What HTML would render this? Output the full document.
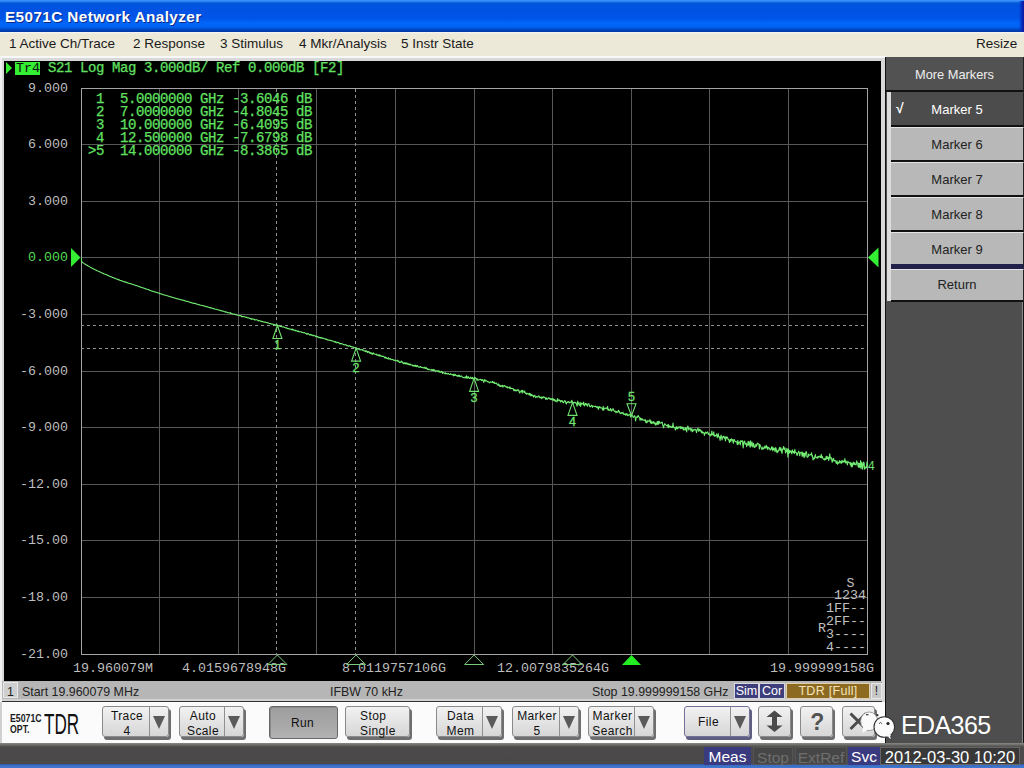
<!DOCTYPE html>
<html><head><meta charset="utf-8">
<style>
*{margin:0;padding:0;box-sizing:border-box}
html,body{width:1024px;height:768px;overflow:hidden;background:#ece9d8;font-family:"Liberation Sans",sans-serif}
.abs{position:absolute}
#title{left:0;top:0;width:1024px;height:32px;background:linear-gradient(#3c98ff 0px,#2a80f0 1.5px,#0058d8 3px,#0052e0 6px,#0054e6 18px,#0066fa 23px,#0064f4 27px,#0042b8 30px,#0038a8 32px)}
#title span{position:absolute;left:5px;top:8px;color:#fff;font-weight:bold;font-size:15.3px;letter-spacing:0.4px;text-shadow:1px 1px 0 #0a2a8a}
#menu{left:0;top:32px;width:1024px;height:25px;background:linear-gradient(#f4f6fa,#ece9d8 2px,#ece9d8);font-size:13.5px;color:#1a1a1a}
#menu span{position:absolute;top:4px}
#frame{left:0;top:56px;width:886px;height:647px;background:#d8d8d8;border-top:2px solid #f8f8f8;border-left:2px solid #f0f0f0}
#plot{left:4px;top:61px;width:877px;height:620px;background:#000}
#stat{left:2px;top:681px;width:880px;height:21px;background:#b6b6b6;font-size:12.4px;color:#222;border-bottom:1px solid #333;box-shadow:inset 0 -2px 0 #d2d2d2}
#stat span{position:absolute;top:4px}
#soft{left:885px;top:57px;width:139px;height:688px;background:#4e4e4e;border-left:1px solid #111;border-right:1px solid #111;box-shadow:inset -1px 0 0 #8a8a8a}
.sk{position:absolute;left:5px;width:133px;height:35px;background:#b8b8b8;color:#222;font-size:13px;text-align:center;line-height:33px;border-top:1px solid #e4e4e4;border-bottom:2px solid #111;border-right:1px solid #222}
#btnbar{left:0;top:702px;width:885px;height:41px;background:#fbfbfb;border-left:2px solid #d0d0d0}
#bot{left:0;top:743px;width:1024px;height:22px;background:linear-gradient(#8a8a84,#6a6a68 2px,#4c4a4a 4px,#4a4848)}
#blue{left:0;top:764px;width:1024px;height:4px;background:linear-gradient(#2a4c90,#3c6cc4 1px,#4078d0)}
.btn{position:absolute;top:706px;height:31px;background:linear-gradient(#f2f2f2,#d6d6d6);border:1px solid #8a8a8a;border-radius:3px;box-shadow:2px 3px 0 #6e6e6e;font-size:12px;color:#111;text-align:center}
.btn .l{position:absolute;left:0;top:5px;bottom:0;display:flex;align-items:center;justify-content:center;line-height:15px;letter-spacing:0.4px}
.btn .d{position:absolute;top:0;right:0;bottom:0;width:19px;border-left:1px solid #909090}
.btn .d i{position:absolute;left:3px;top:9px;width:0;height:0;border-left:6px solid transparent;border-right:6px solid transparent;border-top:13px solid #5a5a5a}
.sb{position:absolute;top:747px;height:18px;font-size:15.5px;line-height:20px;text-align:center}
</style></head><body>
<div id="title" class="abs"><span>E5071C Network Analyzer</span><div style="position:absolute;right:0;top:1px;width:5px;height:31px;background:linear-gradient(90deg,rgba(0,30,160,0),#0a2ab8 60%,#0818a0)"></div></div>
<div id="menu" class="abs">
<span style="left:9px">1 Active Ch/Trace</span>
<span style="left:133px">2 Response</span>
<span style="left:220px">3 Stimulus</span>
<span style="left:299px">4 Mkr/Analysis</span>
<span style="left:401px">5 Instr State</span>
<span style="left:976px">Resize</span>
</div>
<div id="frame" class="abs"></div>
<div id="plot" class="abs"></div>
<svg class="abs" style="left:0;top:0" width="1024" height="768" viewBox="0 0 1024 768">
<g stroke="#585858" stroke-width="1" fill="none" shape-rendering="crispEdges">
<line x1="159.5" y1="88" x2="159.5" y2="655"/>
<line x1="238.5" y1="88" x2="238.5" y2="655"/>
<line x1="316.5" y1="88" x2="316.5" y2="655"/>
<line x1="395.5" y1="88" x2="395.5" y2="655"/>
<line x1="474.5" y1="88" x2="474.5" y2="655"/>
<line x1="552.5" y1="88" x2="552.5" y2="655"/>
<line x1="631.5" y1="88" x2="631.5" y2="655"/>
<line x1="709.5" y1="88" x2="709.5" y2="655"/>
<line x1="788.5" y1="88" x2="788.5" y2="655"/>
<line x1="81" y1="144.5" x2="868" y2="144.5"/>
<line x1="81" y1="201.5" x2="868" y2="201.5"/>
<line x1="81" y1="257.5" x2="868" y2="257.5"/>
<line x1="81" y1="314.5" x2="868" y2="314.5"/>
<line x1="81" y1="371.5" x2="868" y2="371.5"/>
<line x1="81" y1="427.5" x2="868" y2="427.5"/>
<line x1="81" y1="484.5" x2="868" y2="484.5"/>
<line x1="81" y1="540.5" x2="868" y2="540.5"/>
<line x1="81" y1="597.5" x2="868" y2="597.5"/>
<rect x="81.5" y="88.5" width="786" height="566" stroke="#a4a4a4"/>
</g>
<g stroke="#8c928c" stroke-width="1" fill="none" stroke-dasharray="3 3" shape-rendering="crispEdges">
<line x1="81" y1="325.5" x2="868" y2="325.5"/>
<line x1="81" y1="348.5" x2="868" y2="348.5"/>
<line x1="276.5" y1="89" x2="276.5" y2="655"/>
<line x1="355.5" y1="89" x2="355.5" y2="655"/>
</g>
<path d="M81.5,257.5 L81.5,261.7 L82.0,261.9 L82.5,262.3 L83.0,262.8 L83.5,263.1 L84.0,263.4 L84.4,263.7 L84.9,264.0 L85.4,264.3 L85.9,264.8 L86.4,264.8 L86.9,265.3 L87.4,265.5 L87.9,265.8 L88.4,266.1 L88.9,266.4 L89.4,266.6 L89.9,266.9 L90.3,267.2 L90.8,267.4 L91.3,267.8 L91.8,268.1 L92.3,268.2 L92.8,268.5 L93.3,268.9 L93.8,269.1 L94.3,269.3 L94.8,269.6 L95.3,269.8 L95.7,270.0 L96.2,270.1 L96.7,270.5 L97.2,270.7 L97.7,270.9 L98.2,271.1 L98.7,271.4 L99.2,271.6 L99.7,271.8 L100.2,272.1 L100.7,272.4 L101.2,272.5 L101.6,272.7 L102.1,272.9 L102.6,273.3 L103.1,273.4 L103.6,273.7 L104.1,274.0 L104.6,274.0 L105.1,274.2 L105.6,274.5 L106.1,274.6 L106.6,274.8 L107.0,275.0 L107.5,275.3 L108.0,275.4 L108.5,275.8 L109.0,275.9 L109.5,276.1 L110.0,276.5 L110.5,276.5 L111.0,276.8 L111.5,276.9 L112.0,277.2 L112.4,277.4 L112.9,277.5 L113.4,277.8 L113.9,277.9 L114.4,278.2 L114.9,278.3 L115.4,278.6 L115.9,278.6 L116.4,278.9 L116.9,279.1 L117.4,279.2 L117.9,279.4 L118.3,279.5 L118.8,280.0 L119.3,279.9 L119.8,280.2 L120.3,280.4 L120.8,280.6 L121.3,280.6 L121.8,281.0 L122.3,281.0 L122.8,281.1 L123.3,281.5 L123.7,281.6 L124.2,281.8 L124.7,281.9 L125.2,281.9 L125.7,282.0 L126.2,282.5 L126.7,282.6 L127.2,282.6 L127.7,282.7 L128.2,283.0 L128.7,283.2 L129.2,283.3 L129.6,283.5 L130.1,283.6 L130.6,283.8 L131.1,283.9 L131.6,284.1 L132.1,284.3 L132.6,284.4 L133.1,284.7 L133.6,284.8 L134.1,284.8 L134.6,285.1 L135.0,285.3 L135.5,285.2 L136.0,285.5 L136.5,285.5 L137.0,285.8 L137.5,286.1 L138.0,286.3 L138.5,286.2 L139.0,286.3 L139.5,286.8 L140.0,286.9 L140.5,287.0 L140.9,287.3 L141.4,287.4 L141.9,287.6 L142.4,287.7 L142.9,287.8 L143.4,288.0 L143.9,288.1 L144.4,288.4 L144.9,288.5 L145.4,288.9 L145.9,289.0 L146.3,289.0 L146.8,289.3 L147.3,289.3 L147.8,289.5 L148.3,289.6 L148.8,289.8 L149.3,290.0 L149.8,290.3 L150.3,290.5 L150.8,290.7 L151.3,290.8 L151.7,291.0 L152.2,291.1 L152.7,291.3 L153.2,291.4 L153.7,291.6 L154.2,291.9 L154.7,291.9 L155.2,292.0 L155.7,292.1 L156.2,292.3 L156.7,292.6 L157.2,292.8 L157.6,292.7 L158.1,292.9 L158.6,293.0 L159.1,293.1 L159.6,293.6 L160.1,293.6 L160.6,293.7 L161.1,293.9 L161.6,294.0 L162.1,294.2 L162.6,294.4 L163.0,294.7 L163.5,294.7 L164.0,294.9 L164.5,295.0 L165.0,295.2 L165.5,295.2 L166.0,295.3 L166.5,295.5 L167.0,295.7 L167.5,295.8 L168.0,296.0 L168.5,296.2 L168.9,296.3 L169.4,296.4 L169.9,296.6 L170.4,296.7 L170.9,297.0 L171.4,296.9 L171.9,297.2 L172.4,297.4 L172.9,297.4 L173.4,297.6 L173.9,297.7 L174.3,297.9 L174.8,298.1 L175.3,298.2 L175.8,298.1 L176.3,298.4 L176.8,298.7 L177.3,298.7 L177.8,299.0 L178.3,298.8 L178.8,299.3 L179.3,299.2 L179.8,299.3 L180.2,299.7 L180.7,299.6 L181.2,299.7 L181.7,299.9 L182.2,300.0 L182.7,300.1 L183.2,300.3 L183.7,300.4 L184.2,300.6 L184.7,300.7 L185.2,301.0 L185.6,300.9 L186.1,301.2 L186.6,301.4 L187.1,301.4 L187.6,301.4 L188.1,301.6 L188.6,301.9 L189.1,301.9 L189.6,302.1 L190.1,302.2 L190.6,302.4 L191.0,302.8 L191.5,302.6 L192.0,302.9 L192.5,303.0 L193.0,303.2 L193.5,303.4 L194.0,303.4 L194.5,303.3 L195.0,303.4 L195.5,303.7 L196.0,303.7 L196.5,304.0 L196.9,304.3 L197.4,304.2 L197.9,304.3 L198.4,304.6 L198.9,304.6 L199.4,304.7 L199.9,305.0 L200.4,305.2 L200.9,305.2 L201.4,305.3 L201.9,305.5 L202.3,305.5 L202.8,305.5 L203.3,305.9 L203.8,305.9 L204.3,306.0 L204.8,306.2 L205.3,306.2 L205.8,306.6 L206.3,306.6 L206.8,306.5 L207.3,306.8 L207.8,307.1 L208.2,307.1 L208.7,307.2 L209.2,307.4 L209.7,307.7 L210.2,307.5 L210.7,308.0 L211.2,307.9 L211.7,308.1 L212.2,308.4 L212.7,308.2 L213.2,308.5 L213.6,308.8 L214.1,308.7 L214.6,309.0 L215.1,309.3 L215.6,309.3 L216.1,309.3 L216.6,309.4 L217.1,309.6 L217.6,309.7 L218.1,309.8 L218.6,310.0 L219.1,310.0 L219.5,310.3 L220.0,310.4 L220.5,310.5 L221.0,310.8 L221.5,310.9 L222.0,310.7 L222.5,311.0 L223.0,311.3 L223.5,311.3 L224.0,311.6 L224.5,311.6 L224.9,311.9 L225.4,311.8 L225.9,312.3 L226.4,311.9 L226.9,312.4 L227.4,312.7 L227.9,312.6 L228.4,312.7 L228.9,312.8 L229.4,313.1 L229.9,313.0 L230.3,312.6 L230.8,313.5 L231.3,313.4 L231.8,313.6 L232.3,313.7 L232.8,314.1 L233.3,314.2 L233.8,314.1 L234.3,314.3 L234.8,314.1 L235.3,314.6 L235.8,314.6 L236.2,314.3 L236.7,315.0 L237.2,315.2 L237.7,315.2 L238.2,315.3 L238.7,315.3 L239.2,315.5 L239.7,315.8 L240.2,315.8 L240.7,315.5 L241.2,315.9 L241.6,316.7 L242.1,316.4 L242.6,316.6 L243.1,316.5 L243.6,316.8 L244.1,316.5 L244.6,316.8 L245.1,317.0 L245.6,317.2 L246.1,317.4 L246.6,317.4 L247.1,317.4 L247.5,317.7 L248.0,317.9 L248.5,317.8 L249.0,318.1 L249.5,318.3 L250.0,318.5 L250.5,318.6 L251.0,318.7 L251.5,319.3 L252.0,318.7 L252.5,318.9 L252.9,319.2 L253.4,319.1 L253.9,319.3 L254.4,319.4 L254.9,320.1 L255.4,319.8 L255.9,319.8 L256.4,319.7 L256.9,319.8 L257.4,320.0 L257.9,320.6 L258.4,320.9 L258.8,320.5 L259.3,320.8 L259.8,320.7 L260.3,321.0 L260.8,321.1 L261.3,321.6 L261.8,321.3 L262.3,321.6 L262.8,321.6 L263.3,321.7 L263.8,321.9 L264.2,322.0 L264.7,322.2 L265.2,322.1 L265.7,322.3 L266.2,322.6 L266.7,322.8 L267.2,322.5 L267.7,322.9 L268.2,322.9 L268.7,323.1 L269.2,323.4 L269.6,323.6 L270.1,323.5 L270.6,323.6 L271.1,323.7 L271.6,324.2 L272.1,324.2 L272.6,324.2 L273.1,324.0 L273.6,325.0 L274.1,324.5 L274.6,324.9 L275.1,324.8 L275.5,325.1 L276.0,325.1 L276.5,324.9 L277.0,325.3 L277.5,325.4 L278.0,325.6 L278.5,326.0 L279.0,325.8 L279.5,326.1 L280.0,326.4 L280.5,326.3 L280.9,326.5 L281.4,326.4 L281.9,326.8 L282.4,327.0 L282.9,326.7 L283.4,326.9 L283.9,327.0 L284.4,327.3 L284.9,327.6 L285.4,327.8 L285.9,327.9 L286.4,327.7 L286.8,328.1 L287.3,328.6 L287.8,328.4 L288.3,328.8 L288.8,328.6 L289.3,329.0 L289.8,329.2 L290.3,329.0 L290.8,329.2 L291.3,329.7 L291.8,329.3 L292.2,329.1 L292.7,330.1 L293.2,329.4 L293.7,330.2 L294.2,330.3 L294.7,330.3 L295.2,330.8 L295.7,330.2 L296.2,330.6 L296.7,331.0 L297.2,331.0 L297.7,331.5 L298.1,331.3 L298.6,331.1 L299.1,331.9 L299.6,331.8 L300.1,331.8 L300.6,331.7 L301.1,331.7 L301.6,332.3 L302.1,332.5 L302.6,332.4 L303.1,332.7 L303.5,332.8 L304.0,332.6 L304.5,332.6 L305.0,333.1 L305.5,333.4 L306.0,333.3 L306.5,334.1 L307.0,333.7 L307.5,334.1 L308.0,333.4 L308.5,334.0 L308.9,334.3 L309.4,334.5 L309.9,335.2 L310.4,334.5 L310.9,334.4 L311.4,335.2 L311.9,335.0 L312.4,335.1 L312.9,335.8 L313.4,335.3 L313.9,335.3 L314.4,335.8 L314.8,336.0 L315.3,335.9 L315.8,336.7 L316.3,336.4 L316.8,336.3 L317.3,337.0 L317.8,336.6 L318.3,337.1 L318.8,337.7 L319.3,337.3 L319.8,337.7 L320.2,337.5 L320.7,338.0 L321.2,337.5 L321.7,338.2 L322.2,338.0 L322.7,338.4 L323.2,338.5 L323.7,338.2 L324.2,338.6 L324.7,338.9 L325.2,339.3 L325.7,338.8 L326.1,339.0 L326.6,339.5 L327.1,339.5 L327.6,340.0 L328.1,340.1 L328.6,340.2 L329.1,340.0 L329.6,340.2 L330.1,340.6 L330.6,340.3 L331.1,340.5 L331.5,340.8 L332.0,340.7 L332.5,341.2 L333.0,341.3 L333.5,341.3 L334.0,341.6 L334.5,341.5 L335.0,342.2 L335.5,341.6 L336.0,342.4 L336.5,342.3 L337.0,342.9 L337.4,342.4 L337.9,342.3 L338.4,342.5 L338.9,342.8 L339.4,343.6 L339.9,343.5 L340.4,343.6 L340.9,343.9 L341.4,343.4 L341.9,343.8 L342.4,344.0 L342.8,344.0 L343.3,344.6 L343.8,344.8 L344.3,344.9 L344.8,344.6 L345.3,344.8 L345.8,344.9 L346.3,344.9 L346.8,345.8 L347.3,345.7 L347.8,345.6 L348.2,346.2 L348.7,346.1 L349.2,345.8 L349.7,345.9 L350.2,346.0 L350.7,346.5 L351.2,346.7 L351.7,346.5 L352.2,347.1 L352.7,347.0 L353.2,346.8 L353.7,347.5 L354.1,347.8 L354.6,347.7 L355.1,347.7 L355.6,347.8 L356.1,348.1 L356.6,348.1 L357.1,349.0 L357.6,348.9 L358.1,348.7 L358.6,349.2 L359.1,349.5 L359.5,349.6 L360.0,349.7 L360.5,349.6 L361.0,350.0 L361.5,349.7 L362.0,349.4 L362.5,350.2 L363.0,349.8 L363.5,350.3 L364.0,351.0 L364.5,350.9 L365.0,351.3 L365.4,350.8 L365.9,351.7 L366.4,350.9 L366.9,351.3 L367.4,352.5 L367.9,351.6 L368.4,351.5 L368.9,352.5 L369.4,352.0 L369.9,353.2 L370.4,352.6 L370.8,353.5 L371.3,352.8 L371.8,353.8 L372.3,354.3 L372.8,353.3 L373.3,352.8 L373.8,354.0 L374.3,353.7 L374.8,354.1 L375.3,354.4 L375.8,354.2 L376.3,354.0 L376.7,355.2 L377.2,354.7 L377.7,355.0 L378.2,355.8 L378.7,354.8 L379.2,354.8 L379.7,356.1 L380.2,355.2 L380.7,356.0 L381.2,356.3 L381.7,355.8 L382.1,356.4 L382.6,356.5 L383.1,356.2 L383.6,356.5 L384.1,356.8 L384.6,357.8 L385.1,358.1 L385.6,357.1 L386.1,358.1 L386.6,357.8 L387.1,358.5 L387.5,358.3 L388.0,358.9 L388.5,357.8 L389.0,359.1 L389.5,358.8 L390.0,359.0 L390.5,358.6 L391.0,359.8 L391.5,359.4 L392.0,359.6 L392.5,359.4 L393.0,359.6 L393.4,360.1 L393.9,360.0 L394.4,360.4 L394.9,360.2 L395.4,360.5 L395.9,360.9 L396.4,360.8 L396.9,360.7 L397.4,360.1 L397.9,361.4 L398.4,361.2 L398.8,360.8 L399.3,362.5 L399.8,362.5 L400.3,362.4 L400.8,362.0 L401.3,361.0 L401.8,362.1 L402.3,361.8 L402.8,362.6 L403.3,363.7 L403.8,363.8 L404.3,362.5 L404.7,363.0 L405.2,363.8 L405.7,362.8 L406.2,364.1 L406.7,363.1 L407.2,363.1 L407.7,364.2 L408.2,364.5 L408.7,363.7 L409.2,364.7 L409.7,364.0 L410.1,365.0 L410.6,364.3 L411.1,364.7 L411.6,365.1 L412.1,365.4 L412.6,365.0 L413.1,366.2 L413.6,365.5 L414.1,365.7 L414.6,365.3 L415.1,366.4 L415.6,365.1 L416.0,366.2 L416.5,366.7 L417.0,365.6 L417.5,365.6 L418.0,366.6 L418.5,367.1 L419.0,366.8 L419.5,367.3 L420.0,367.2 L420.5,366.4 L421.0,367.1 L421.4,367.4 L421.9,367.4 L422.4,367.7 L422.9,367.4 L423.4,367.5 L423.9,368.2 L424.4,368.1 L424.9,367.1 L425.4,368.2 L425.9,368.6 L426.4,367.7 L426.8,368.8 L427.3,369.5 L427.8,368.7 L428.3,369.6 L428.8,369.5 L429.3,369.2 L429.8,369.6 L430.3,370.0 L430.8,370.0 L431.3,370.2 L431.8,369.4 L432.3,370.5 L432.7,370.5 L433.2,369.3 L433.7,370.8 L434.2,369.8 L434.7,370.0 L435.2,370.9 L435.7,371.7 L436.2,370.8 L436.7,370.8 L437.2,370.8 L437.7,371.4 L438.1,370.9 L438.6,370.9 L439.1,372.3 L439.6,371.1 L440.1,371.9 L440.6,372.4 L441.1,372.3 L441.6,371.3 L442.1,371.9 L442.6,373.5 L443.1,372.6 L443.6,372.8 L444.0,372.9 L444.5,373.2 L445.0,373.8 L445.5,372.7 L446.0,373.8 L446.5,373.6 L447.0,373.8 L447.5,374.0 L448.0,373.3 L448.5,373.6 L449.0,374.3 L449.4,374.5 L449.9,374.4 L450.4,373.7 L450.9,374.2 L451.4,374.3 L451.9,374.7 L452.4,374.8 L452.9,374.6 L453.4,375.9 L453.9,374.0 L454.4,375.5 L454.9,375.4 L455.3,374.4 L455.8,375.2 L456.3,375.4 L456.8,375.8 L457.3,376.5 L457.8,375.6 L458.3,375.1 L458.8,376.4 L459.3,375.2 L459.8,376.7 L460.3,376.6 L460.7,376.0 L461.2,376.3 L461.7,376.0 L462.2,376.9 L462.7,377.2 L463.2,377.8 L463.7,377.5 L464.2,377.5 L464.7,377.7 L465.2,376.8 L465.7,377.4 L466.1,378.3 L466.6,375.7 L467.1,377.8 L467.6,378.1 L468.1,376.7 L468.6,376.8 L469.1,378.3 L469.6,378.5 L470.1,378.3 L470.6,377.1 L471.1,378.1 L471.6,378.5 L472.0,378.1 L472.5,377.4 L473.0,379.1 L473.5,378.6 L474.0,379.3 L474.5,377.2 L475.0,377.5 L475.5,378.1 L476.0,378.9 L476.5,378.5 L477.0,380.3 L477.4,378.9 L477.9,380.1 L478.4,380.2 L478.9,379.9 L479.4,379.8 L479.9,379.3 L480.4,379.3 L480.9,379.7 L481.4,380.6 L481.9,379.7 L482.4,380.3 L482.9,379.6 L483.3,381.1 L483.8,382.4 L484.3,381.0 L484.8,379.4 L485.3,380.7 L485.8,381.2 L486.3,380.6 L486.8,381.0 L487.3,381.2 L487.8,381.9 L488.3,381.7 L488.7,381.7 L489.2,382.4 L489.7,382.9 L490.2,382.2 L490.7,381.8 L491.2,382.1 L491.7,382.4 L492.2,382.5 L492.7,381.2 L493.2,382.9 L493.7,382.5 L494.2,382.1 L494.6,383.5 L495.1,383.5 L495.6,383.1 L496.1,382.8 L496.6,383.9 L497.1,384.0 L497.6,384.3 L498.1,385.4 L498.6,383.9 L499.1,385.0 L499.6,386.2 L500.0,385.2 L500.5,386.5 L501.0,386.1 L501.5,385.6 L502.0,386.4 L502.5,385.2 L503.0,387.1 L503.5,386.0 L504.0,386.0 L504.5,385.5 L505.0,386.0 L505.4,386.7 L505.9,386.9 L506.4,387.2 L506.9,386.5 L507.4,387.9 L507.9,387.2 L508.4,387.8 L508.9,387.7 L509.4,388.2 L509.9,386.7 L510.4,388.8 L510.9,388.3 L511.3,388.5 L511.8,388.4 L512.3,388.7 L512.8,388.8 L513.3,388.6 L513.8,390.6 L514.3,389.6 L514.8,390.7 L515.3,389.7 L515.8,390.9 L516.3,390.9 L516.7,390.4 L517.2,389.5 L517.7,390.3 L518.2,390.6 L518.7,389.9 L519.2,391.9 L519.7,392.9 L520.2,391.8 L520.7,391.8 L521.2,390.8 L521.7,390.3 L522.2,393.1 L522.6,390.3 L523.1,391.2 L523.6,391.9 L524.1,392.4 L524.6,390.9 L525.1,392.9 L525.6,393.5 L526.1,393.1 L526.6,394.4 L527.1,393.2 L527.6,393.8 L528.0,393.6 L528.5,393.7 L529.0,394.9 L529.5,393.2 L530.0,395.2 L530.5,393.8 L531.0,395.9 L531.5,394.5 L532.0,395.6 L532.5,395.1 L533.0,395.7 L533.5,397.1 L533.9,396.4 L534.4,395.6 L534.9,395.3 L535.4,397.1 L535.9,397.7 L536.4,396.9 L536.9,396.5 L537.4,396.9 L537.9,397.2 L538.4,396.0 L538.9,396.0 L539.3,396.3 L539.8,397.8 L540.3,397.1 L540.8,397.4 L541.3,398.6 L541.8,396.8 L542.3,397.5 L542.8,398.1 L543.3,396.7 L543.8,397.3 L544.3,397.4 L544.7,397.2 L545.2,397.7 L545.7,399.4 L546.2,398.8 L546.7,397.8 L547.2,399.3 L547.7,398.8 L548.2,398.6 L548.7,397.8 L549.2,398.0 L549.7,398.4 L550.2,399.4 L550.6,398.6 L551.1,399.0 L551.6,399.7 L552.1,398.5 L552.6,399.3 L553.1,400.4 L553.6,398.8 L554.1,400.2 L554.6,399.5 L555.1,401.4 L555.6,400.2 L556.0,401.1 L556.5,401.2 L557.0,402.0 L557.5,398.6 L558.0,400.6 L558.5,400.4 L559.0,399.7 L559.5,400.8 L560.0,400.3 L560.5,402.0 L561.0,400.7 L561.5,401.3 L561.9,400.6 L562.4,400.9 L562.9,402.4 L563.4,402.8 L563.9,402.1 L564.4,400.6 L564.9,401.0 L565.4,401.1 L565.9,403.3 L566.4,404.0 L566.9,402.2 L567.3,402.0 L567.8,402.3 L568.3,401.5 L568.8,402.0 L569.3,403.0 L569.8,402.8 L570.3,401.9 L570.8,402.1 L571.3,402.3 L571.8,400.2 L572.3,402.6 L572.8,402.3 L573.2,403.4 L573.7,402.9 L574.2,402.2 L574.7,402.2 L575.2,403.0 L575.7,402.6 L576.2,403.0 L576.7,404.9 L577.2,406.3 L577.7,401.1 L578.2,402.6 L578.6,403.5 L579.1,405.2 L579.6,404.8 L580.1,402.4 L580.6,406.4 L581.1,404.2 L581.6,403.1 L582.1,403.9 L582.6,403.4 L583.1,404.3 L583.6,402.0 L584.0,405.4 L584.5,405.8 L585.0,404.3 L585.5,403.3 L586.0,404.8 L586.5,403.8 L587.0,405.5 L587.5,406.2 L588.0,403.8 L588.5,403.7 L589.0,403.8 L589.5,405.9 L589.9,406.7 L590.4,406.8 L590.9,405.9 L591.4,405.2 L591.9,405.4 L592.4,407.4 L592.9,405.9 L593.4,406.2 L593.9,406.2 L594.4,406.4 L594.9,406.7 L595.3,406.0 L595.8,406.6 L596.3,406.6 L596.8,407.6 L597.3,406.6 L597.8,407.3 L598.3,409.4 L598.8,406.8 L599.3,407.7 L599.8,406.6 L600.3,407.8 L600.8,407.9 L601.2,407.7 L601.7,408.0 L602.2,408.6 L602.7,410.1 L603.2,406.4 L603.7,410.1 L604.2,408.9 L604.7,408.0 L605.2,408.4 L605.7,408.3 L606.2,408.2 L606.6,407.8 L607.1,408.9 L607.6,406.3 L608.1,410.5 L608.6,409.3 L609.1,410.1 L609.6,410.4 L610.1,409.6 L610.6,408.5 L611.1,410.9 L611.6,411.1 L612.1,409.6 L612.5,410.0 L613.0,408.6 L613.5,409.7 L614.0,410.7 L614.5,411.4 L615.0,410.9 L615.5,411.5 L616.0,412.9 L616.5,411.5 L617.0,411.9 L617.5,412.0 L617.9,412.4 L618.4,410.2 L618.9,411.4 L619.4,411.3 L619.9,413.1 L620.4,413.7 L620.9,413.0 L621.4,412.6 L621.9,413.4 L622.4,413.3 L622.9,412.2 L623.3,413.1 L623.8,414.6 L624.3,414.1 L624.8,414.5 L625.3,413.7 L625.8,415.4 L626.3,414.4 L626.8,413.6 L627.3,414.5 L627.8,415.7 L628.3,415.5 L628.8,414.8 L629.2,414.5 L629.7,414.3 L630.2,415.5 L630.7,417.0 L631.2,414.0 L631.7,415.5 L632.2,415.5 L632.7,415.8 L633.2,417.5 L633.7,416.9 L634.2,416.4 L634.6,415.7 L635.1,417.0 L635.6,420.9 L636.1,417.8 L636.6,417.3 L637.1,416.4 L637.6,417.3 L638.1,415.4 L638.6,416.8 L639.1,417.0 L639.6,417.7 L640.1,420.5 L640.5,418.1 L641.0,418.5 L641.5,419.9 L642.0,418.8 L642.5,419.1 L643.0,420.3 L643.5,420.0 L644.0,420.3 L644.5,419.9 L645.0,420.8 L645.5,419.7 L645.9,422.8 L646.4,421.0 L646.9,422.8 L647.4,421.5 L647.9,420.4 L648.4,421.1 L648.9,421.4 L649.4,421.3 L649.9,419.6 L650.4,423.0 L650.9,420.7 L651.4,423.7 L651.8,422.5 L652.3,421.9 L652.8,423.2 L653.3,422.1 L653.8,421.5 L654.3,424.0 L654.8,422.7 L655.3,423.2 L655.8,425.3 L656.3,423.2 L656.8,424.1 L657.2,421.5 L657.7,424.4 L658.2,421.3 L658.7,424.2 L659.2,421.2 L659.7,423.0 L660.2,423.2 L660.7,422.9 L661.2,422.9 L661.7,422.3 L662.2,422.0 L662.6,424.7 L663.1,426.0 L663.6,427.9 L664.1,425.1 L664.6,423.7 L665.1,424.3 L665.6,424.7 L666.1,425.4 L666.6,425.9 L667.1,425.5 L667.6,424.8 L668.1,427.6 L668.5,424.5 L669.0,427.4 L669.5,425.8 L670.0,426.5 L670.5,426.3 L671.0,427.3 L671.5,427.5 L672.0,426.4 L672.5,427.6 L673.0,423.1 L673.5,426.9 L673.9,427.3 L674.4,427.3 L674.9,428.0 L675.4,430.0 L675.9,427.2 L676.4,426.5 L676.9,429.0 L677.4,427.1 L677.9,428.8 L678.4,427.3 L678.9,426.9 L679.4,426.8 L679.8,427.0 L680.3,428.6 L680.8,426.5 L681.3,428.4 L681.8,427.4 L682.3,427.0 L682.8,428.5 L683.3,429.9 L683.8,427.4 L684.3,429.8 L684.8,429.6 L685.2,430.0 L685.7,427.5 L686.2,428.9 L686.7,431.9 L687.2,427.9 L687.7,426.1 L688.2,426.6 L688.7,429.9 L689.2,429.1 L689.7,428.6 L690.2,428.2 L690.7,429.5 L691.1,431.1 L691.6,428.7 L692.1,429.0 L692.6,431.8 L693.1,430.5 L693.6,429.7 L694.1,430.2 L694.6,429.6 L695.1,429.3 L695.6,429.7 L696.1,430.8 L696.5,432.6 L697.0,429.9 L697.5,428.9 L698.0,428.2 L698.5,431.1 L699.0,431.2 L699.5,429.3 L700.0,429.4 L700.5,431.0 L701.0,430.6 L701.5,432.8 L701.9,431.0 L702.4,433.1 L702.9,432.3 L703.4,432.3 L703.9,432.9 L704.4,435.4 L704.9,433.7 L705.4,432.1 L705.9,432.8 L706.4,433.4 L706.9,432.3 L707.4,432.1 L707.8,431.9 L708.3,434.5 L708.8,433.4 L709.3,434.0 L709.8,434.9 L710.3,436.0 L710.8,434.1 L711.3,435.3 L711.8,431.0 L712.3,434.4 L712.8,434.8 L713.2,435.2 L713.7,431.9 L714.2,436.2 L714.7,435.2 L715.2,436.3 L715.7,435.4 L716.2,435.4 L716.7,433.9 L717.2,437.8 L717.7,435.9 L718.2,433.5 L718.7,436.9 L719.1,436.5 L719.6,437.7 L720.1,440.5 L720.6,436.9 L721.1,435.1 L721.6,437.7 L722.1,440.0 L722.6,436.9 L723.1,437.3 L723.6,436.1 L724.1,436.4 L724.5,438.3 L725.0,437.4 L725.5,441.0 L726.0,436.6 L726.5,438.2 L727.0,437.0 L727.5,437.2 L728.0,439.4 L728.5,439.3 L729.0,440.6 L729.5,442.6 L730.0,439.7 L730.4,439.4 L730.9,441.5 L731.4,438.8 L731.9,439.9 L732.4,439.5 L732.9,441.6 L733.4,443.3 L733.9,439.4 L734.4,439.8 L734.9,441.1 L735.4,441.7 L735.8,441.6 L736.3,441.5 L736.8,442.2 L737.3,444.8 L737.8,440.4 L738.3,444.2 L738.8,442.5 L739.3,442.5 L739.8,441.8 L740.3,444.9 L740.8,440.5 L741.2,441.5 L741.7,441.4 L742.2,440.7 L742.7,444.1 L743.2,448.0 L743.7,442.5 L744.2,441.0 L744.7,441.4 L745.2,444.3 L745.7,443.6 L746.2,443.1 L746.7,446.6 L747.1,444.9 L747.6,445.0 L748.1,441.4 L748.6,445.2 L749.1,441.6 L749.6,444.3 L750.1,447.2 L750.6,440.9 L751.1,446.2 L751.6,443.7 L752.1,442.0 L752.5,445.8 L753.0,447.1 L753.5,443.4 L754.0,445.1 L754.5,447.4 L755.0,447.2 L755.5,446.2 L756.0,444.0 L756.5,446.2 L757.0,444.7 L757.5,443.1 L758.0,443.8 L758.4,443.7 L758.9,444.1 L759.4,449.0 L759.9,444.3 L760.4,445.9 L760.9,446.8 L761.4,448.5 L761.9,449.4 L762.4,448.7 L762.9,447.0 L763.4,449.0 L763.8,448.5 L764.3,448.2 L764.8,446.1 L765.3,447.9 L765.8,447.7 L766.3,445.3 L766.8,448.2 L767.3,446.7 L767.8,449.7 L768.3,447.3 L768.8,447.8 L769.3,447.8 L769.7,449.0 L770.2,450.1 L770.7,448.9 L771.2,449.3 L771.7,446.7 L772.2,447.0 L772.7,450.8 L773.2,447.7 L773.7,449.7 L774.2,448.2 L774.7,449.9 L775.1,451.8 L775.6,447.5 L776.1,448.5 L776.6,451.6 L777.1,452.9 L777.6,450.6 L778.1,451.8 L778.6,450.4 L779.1,448.8 L779.6,447.4 L780.1,450.7 L780.5,447.7 L781.0,448.2 L781.5,451.1 L782.0,453.4 L782.5,449.0 L783.0,449.5 L783.5,446.5 L784.0,448.2 L784.5,449.5 L785.0,447.9 L785.5,453.0 L786.0,450.8 L786.4,451.8 L786.9,448.2 L787.4,450.4 L787.9,457.1 L788.4,449.1 L788.9,453.4 L789.4,450.4 L789.9,452.8 L790.4,451.6 L790.9,450.9 L791.4,451.8 L791.8,454.0 L792.3,449.8 L792.8,451.7 L793.3,452.6 L793.8,451.3 L794.3,453.7 L794.8,449.3 L795.3,452.5 L795.8,452.3 L796.3,452.5 L796.8,454.9 L797.3,455.5 L797.7,453.0 L798.2,452.8 L798.7,451.1 L799.2,452.8 L799.7,455.8 L800.2,452.9 L800.7,452.4 L801.2,452.1 L801.7,453.5 L802.2,456.5 L802.7,452.1 L803.1,455.8 L803.6,453.4 L804.1,457.6 L804.6,453.2 L805.1,456.3 L805.6,452.8 L806.1,451.6 L806.6,452.8 L807.1,457.4 L807.6,457.0 L808.1,457.0 L808.6,454.1 L809.0,454.8 L809.5,455.3 L810.0,455.1 L810.5,454.6 L811.0,454.6 L811.5,452.7 L812.0,456.2 L812.5,455.7 L813.0,459.9 L813.5,458.9 L814.0,457.8 L814.4,458.8 L814.9,456.2 L815.4,454.6 L815.9,457.6 L816.4,457.8 L816.9,458.0 L817.4,456.8 L817.9,458.2 L818.4,456.4 L818.9,456.7 L819.4,456.7 L819.8,456.0 L820.3,457.5 L820.8,457.4 L821.3,454.3 L821.8,458.0 L822.3,456.4 L822.8,457.9 L823.3,459.1 L823.8,459.1 L824.3,460.0 L824.8,458.4 L825.3,459.7 L825.7,459.4 L826.2,456.2 L826.7,459.0 L827.2,456.5 L827.7,458.4 L828.2,457.3 L828.7,460.4 L829.2,458.9 L829.7,453.9 L830.2,457.7 L830.7,457.4 L831.1,459.1 L831.6,457.9 L832.1,462.1 L832.6,461.6 L833.1,459.0 L833.6,458.3 L834.1,460.9 L834.6,460.6 L835.1,461.0 L835.6,460.7 L836.1,462.9 L836.6,463.5 L837.0,460.8 L837.5,464.3 L838.0,462.8 L838.5,462.3 L839.0,463.2 L839.5,460.6 L840.0,462.1 L840.5,461.4 L841.0,463.4 L841.5,463.0 L842.0,460.4 L842.4,460.8 L842.9,462.7 L843.4,461.0 L843.9,461.5 L844.4,461.6 L844.9,458.6 L845.4,463.0 L845.9,461.3 L846.4,461.4 L846.9,462.9 L847.4,464.9 L847.9,461.1 L848.3,462.1 L848.8,462.6 L849.3,462.8 L849.8,462.8 L850.3,464.9 L850.8,462.4 L851.3,467.0 L851.8,463.3 L852.3,466.6 L852.8,464.2 L853.3,462.0 L853.7,464.2 L854.2,464.7 L854.7,462.6 L855.2,464.4 L855.7,464.8 L856.2,464.9 L856.7,460.8 L857.2,462.7 L857.7,463.2 L858.2,467.0 L858.7,463.1 L859.1,467.4 L859.6,463.6 L860.1,467.2 L860.6,460.5 L861.1,468.6 L861.6,462.2 L862.1,463.3 L862.6,469.1 L863.1,465.7 L863.6,462.1 L864.1,462.8 L864.6,469.1 L865.0,466.7 L865.5,468.2 L866.0,468.0 L866.5,467.2 L867.0,461.7 L867.5,465.6" stroke="#72ec72" stroke-width="1.1" fill="none" stroke-linejoin="round"/>
<g font-family="Liberation Mono" font-size="13.33" fill="#bdbdbd" text-anchor="end">
<text x="68" y="91.5">9.000</text>
<text x="68" y="148.1">6.000</text>
<text x="68" y="204.7">3.000</text>
<text x="68" y="261.3" fill="#55dd55">0.000</text>
<text x="68" y="317.9">-3.000</text>
<text x="68" y="374.5">-6.000</text>
<text x="68" y="431.1">-9.000</text>
<text x="68" y="487.7">-12.00</text>
<text x="68" y="544.3">-15.00</text>
<text x="68" y="600.9">-18.00</text>
<text x="68" y="657.5">-21.00</text>
</g>
<g font-family="Liberation Mono" font-size="13.33" fill="#bdbdbd">
<text x="73" y="672">19.960079M</text>
<text x="182" y="672">4.0159678948G</text>
<text x="342" y="672">8.0119757106G</text>
<text x="497" y="672">12.0079835264G</text>
<text x="770" y="672">19.999999158G</text>
</g>
<g font-family="Liberation Mono" font-size="13.33" fill="#c0c0c0" text-anchor="end">
<text x="854.5" y="586.5">S</text>
<text x="866" y="599">1234</text>
<text x="866" y="612">1FF--</text>
<text x="866" y="625">2FF--</text>
<text x="866" y="638">3----</text>
<text x="866" y="651">4----</text>
<text x="826" y="631.5">R</text>
</g>
<g font-family="Liberation Mono" font-size="14" letter-spacing="-0.4" fill="#62e062" stroke="#62e062" stroke-width="0.25">
<text x="48" y="72">S21 Log Mag 3.000dB/ Ref 0.000dB [F2]</text>
<text x="88" y="103">&#160;1&#160;&#160;5.0000000&#160;GHz&#160;-3.6046&#160;dB</text>
<text x="88" y="116">&#160;2&#160;&#160;7.0000000&#160;GHz&#160;-4.8045&#160;dB</text>
<text x="88" y="129">&#160;3&#160;&#160;10.000000&#160;GHz&#160;-6.4095&#160;dB</text>
<text x="88" y="142">&#160;4&#160;&#160;12.500000&#160;GHz&#160;-7.6798&#160;dB</text>
<text x="88" y="155">&gt;5&#160;&#160;14.000000&#160;GHz&#160;-8.3865&#160;dB</text>
</g>
<polygon points="277.4,325.5 281.9,338.5 272.9,338.5" fill="none" stroke="#70e070" stroke-width="1.1"/>
<text x="277.4" y="349.0" font-family="Liberation Sans" font-size="12.5" fill="#70e070" stroke="#70e070" stroke-width="0.3" text-anchor="middle">1</text>
<polygon points="277.4,655 286.9,664.5 267.9,664.5" fill="none" stroke="#7acc7a" stroke-width="1"/>
<polygon points="356.1,348.1 360.6,361.1 351.6,361.1" fill="none" stroke="#70e070" stroke-width="1.1"/>
<text x="356.1" y="371.6" font-family="Liberation Sans" font-size="12.5" fill="#70e070" stroke="#70e070" stroke-width="0.3" text-anchor="middle">2</text>
<polygon points="356.1,655 365.6,664.5 346.6,664.5" fill="none" stroke="#7acc7a" stroke-width="1"/>
<polygon points="474.1,378.4 478.6,391.4 469.6,391.4" fill="none" stroke="#70e070" stroke-width="1.1"/>
<text x="474.1" y="401.9" font-family="Liberation Sans" font-size="12.5" fill="#70e070" stroke="#70e070" stroke-width="0.3" text-anchor="middle">3</text>
<polygon points="474.1,655 483.6,664.5 464.6,664.5" fill="none" stroke="#7acc7a" stroke-width="1"/>
<polygon points="572.5,402.4 577.0,415.4 568.0,415.4" fill="none" stroke="#70e070" stroke-width="1.1"/>
<text x="572.5" y="425.9" font-family="Liberation Sans" font-size="12.5" fill="#70e070" stroke="#70e070" stroke-width="0.3" text-anchor="middle">4</text>
<polygon points="572.5,655 582.0,664.5 563.0,664.5" fill="none" stroke="#7acc7a" stroke-width="1"/>
<polygon points="631.5,415.7 636.0,403.7 627.0,403.7" fill="none" stroke="#70e070" stroke-width="1.1"/>
<text x="631.5" y="401.2" font-family="Liberation Sans" font-size="12.5" fill="#70e070" stroke="#70e070" stroke-width="0.3" text-anchor="middle">5</text>
<polygon points="631.5,655 641.0,665 622.0,665" fill="#22ee22"/>
<text x="868" y="470" font-family="Liberation Sans" font-size="12" fill="#70e070">4</text>
<rect x="15" y="62" width="25" height="13" fill="#33ee33"/>
<text x="16" y="72" font-family="Liberation Mono" font-size="13.33" fill="#111">Tr4</text>
<polygon points="6,62 12,68 6,74" fill="#33ee33"/>
<polygon points="71,248 80.5,257.5 71,267" fill="#33ee33"/>
<polygon points="878.5,247.5 868,257.5 878.5,267.5" fill="#33ee33"/>
</svg>
<div id="stat" class="abs">
<div style="position:absolute;left:1px;top:1px;width:15px;height:16px;background:#cfcfcf;border:1px solid #e8e8e8;text-align:center;line-height:18px">1</div>
<span style="left:20px">Start 19.960079 MHz</span>
<span style="left:328px">IFBW 70 kHz</span>
<span style="left:590px">Stop 19.999999158 GHz</span>
<div style="position:absolute;left:732px;top:2px;width:25px;height:16px;background:#3e3e7c;border:1px solid #d8d8e0;color:#fff;text-align:center;line-height:15px;font-size:12.5px">Sim</div>
<div style="position:absolute;left:757px;top:2px;width:26px;height:16px;background:#3e3e7c;border:1px solid #d8d8e0;color:#fff;text-align:center;line-height:15px;font-size:12.5px">Cor</div>
<div style="position:absolute;left:784px;top:2px;width:84px;height:16px;background:#8c6a22;border:1px solid #e0d0b0;color:#f4e4b8;text-align:center;line-height:15px;font-size:12.5px;letter-spacing:0.3px">TDR [Full]</div>
<div style="position:absolute;left:869px;top:2px;width:11px;height:16px;background:#c8c8c8;border:1px solid #e8e8e8;color:#222;text-align:center;line-height:15px;font-size:12px">!</div>
</div>
<div id="soft" class="abs">
<div style="position:absolute;left:0;top:0;width:138px;height:35px;background:#525252;color:#eee;font-size:12.8px;text-align:center;line-height:35px;border-bottom:2px solid #111;border-right:1px solid #222">More Markers</div>
<div style="position:absolute;left:1px;top:35px;width:5px;height:209px;background:#dcdcdc;border-right:1px solid #999"></div>
<div class="sk" style="top:35px;background:#4c4c4c;color:#fff;border-top-color:#4c4c4c">Marker 5<span style="position:absolute;left:5px;top:-1px;font-size:14px;font-weight:bold">&#x221A;</span></div>
<div class="sk" style="top:70px">Marker 6</div>
<div class="sk" style="top:105px">Marker 7</div>
<div class="sk" style="top:140px">Marker 8</div>
<div class="sk" style="top:175px;height:37px;border-bottom:5px solid #20204a">Marker 9</div>
<div class="sk" style="top:212px;height:33px;line-height:30px">Return</div>
</div>
<div id="btnbar" class="abs"></div>
<div class="btn" style="left:102px;width:67px;"><div class="l" style="width:48px">Trace<br>4</div><div class="d"><i></i></div></div>
<div class="btn" style="left:179px;width:65px;"><div class="l" style="width:46px">Auto<br>Scale</div><div class="d"><i></i></div></div>
<div class="btn" style="left:269px;width:69px;height:33px;background:linear-gradient(#9e9e9e,#a8a8a8 60%,#b2b2b2);border-color:#686868;box-shadow:inset 1px 1px 0 #8a8a8a"><div class="l" style="width:69px"><div style="margin-top:-3px;padding-right:4px">Run</div></div></div>
<div class="btn" style="left:345px;width:65px;"><div class="l" style="width:65px"><div style="text-align:left;width:100%;padding-left:14px">Stop<br>Single</div></div></div>
<div class="btn" style="left:436px;width:66px;"><div class="l" style="width:47px">Data<br>Mem</div><div class="d"><i></i></div></div>
<div class="btn" style="left:512px;width:67px;"><div class="l" style="width:48px">Marker<br>5</div><div class="d"><i></i></div></div>
<div class="btn" style="left:588px;width:66px;"><div class="l" style="width:47px">Marker<br>Search</div><div class="d"><i></i></div></div>
<div class="btn" style="left:684px;width:66px;border-color:#707098;box-shadow:2px 3px 0 #5e5e80"><div class="l" style="width:47px"><div style="margin-top:-4px">File</div></div><div class="d"><i></i></div></div>
<div class="btn" style="left:758px;width:33px;"><div class="l" style="width:33px"><svg style="margin-top:-5px;margin-left:-2px" width="18" height="23" viewBox="0 0 18 23"><path d="M8.5,0.5 L16.5,7 L11,7 L11,15.5 L16.5,15.5 L8.5,22 L0.5,15.5 L6,15.5 L6,7 L0.5,7 Z" fill="#4a4a4a"/></svg></div></div>
<div class="btn" style="left:800px;width:33px;"><div class="l" style="width:33px"><span style="font-size:23px;font-weight:bold;color:#525252;margin-top:-4px">?</span></div></div>
<div class="btn" style="left:842px;width:33px;"><div class="l" style="width:33px"><svg style="position:absolute;left:6px;top:0px" width="20" height="19" viewBox="0 0 20 19"><path d="M1.5,1.5 L17,17 M17,1.5 L1.5,17" stroke="#4a4a4a" stroke-width="3"/></svg></div></div>
<div class="abs" style="left:10px;top:712.5px;font-size:11.5px;font-weight:bold;line-height:11.5px;color:#1a1a1a;transform:scaleX(0.76);transform-origin:left top">E5071C<br>OPT.</div>
<div class="abs" style="left:44px;top:709px;font-size:29px;line-height:30px;color:#111;transform:scaleX(0.59);transform-origin:left top">TDR</div>
<div id="bot" class="abs"></div>
<div id="blue" class="abs"></div>
<div class="sb" style="left:704px;width:47px;background:#3a3a7e;color:#fff">Meas</div>
<div class="sb" style="left:753px;width:40px;background:#464646;color:#6e6e6e;border:1px solid #555">Stop</div>
<div class="sb" style="left:795px;width:52px;background:#464646;color:#6e6e6e;border:1px solid #555">ExtRef</div>
<div class="sb" style="left:848px;width:32px;background:#3a3a7e;color:#fff">Svc</div>
<div class="sb" style="left:880px;width:140px;background:#383838;color:#fff;border:1px solid #666;font-size:16.5px;line-height:18px">2012-03-30 10:20</div>
<div class="abs" style="left:901px;top:711px;font-size:25px;letter-spacing:-0.6px;color:#fff">EDA365</div>
<svg class="abs" style="left:855px;top:706px" width="48" height="40" viewBox="0 0 48 40">
<ellipse cx="14.2" cy="15.3" rx="8.6" ry="9.3" fill="#fbfbfb" stroke="#888" stroke-width="0.8"/>
<path d="M8,21 L7.5,27 L13,23.5 Z" fill="#fbfbfb"/>
<circle cx="29.3" cy="21" r="10.3" fill="#fbfbfb" stroke="#333" stroke-width="1.1"/>
<path d="M32,30.5 L36.5,34.5 L35.5,29 Z" fill="#fbfbfb" stroke="#333" stroke-width="0.9" stroke-linejoin="round"/>
<path d="M31.5,30.2 L35.8,29.2" stroke="#fbfbfb" stroke-width="1.3"/>
<circle cx="33" cy="17.5" r="1.6" fill="#222"/>
<path d="M24,18 l1.5,-1.8 1.5,1.8" fill="none" stroke="#555" stroke-width="0.9"/>
<rect x="11" y="8" width="2.5" height="1.3" fill="#444"/><circle cx="22.4" cy="9.2" r="1.1" fill="#333"/>
</svg>
</body></html>
